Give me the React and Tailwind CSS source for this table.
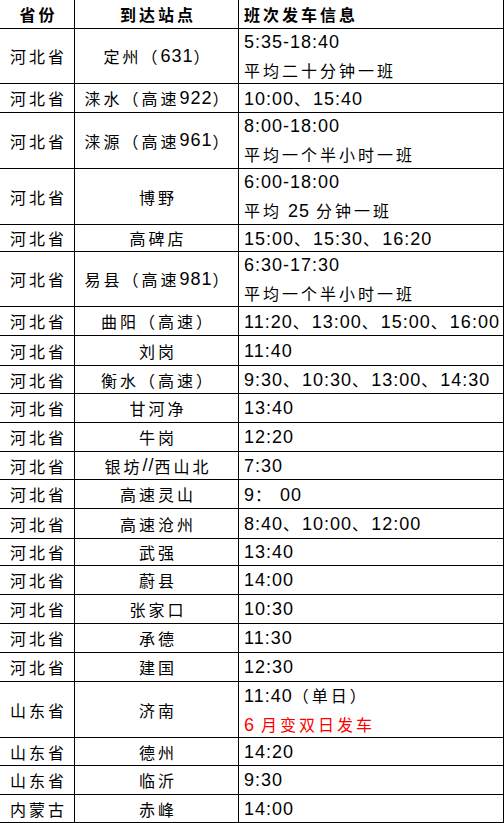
import React from 'react'

// [省份, 到达站点, 班次信息 lines, row height incl. bottom border, red second line]
const ROWS = [
  ['河北省', '定州（631）', ['5:35-18:40', '平均二十分钟一班'], 55],
  ['河北省', '涞水（高速 922）', ['10:00、15:40'], 29],
  ['河北省', '涞源（高速 961）', ['8:00-18:00', '平均一个半小时一班'], 56],
  ['河北省', '博野', ['6:00-18:00', '平均 25 分钟一班'], 56],
  ['河北省', '高碑店', ['15:00、15:30、16:20'], 27],
  ['河北省', '易县（高速 981）', ['6:30-17:30', '平均一个半小时一班'], 55],
  ['河北省', '曲阳（高速）', ['11:20、13:00、15:00、16:00'], 29],
  ['河北省', '刘岗', ['11:40'], 30],
  ['河北省', '衡水（高速）', ['9:30、10:30、13:00、14:30'], 28],
  ['河北省', '甘河净', ['13:40'], 29],
  ['河北省', '牛岗', ['12:20'], 29],
  ['河北省', '银坊//西山北', ['7:30'], 28],
  ['河北省', '高速灵山', ['9： 00'], 29],
  ['河北省', '高速沧州', ['8:40、10:00、12:00'], 30],
  ['河北省', '武强', ['13:40'], 27],
  ['河北省', '蔚县', ['14:00'], 29],
  ['河北省', '张家口', ['10:30'], 29],
  ['河北省', '承德', ['11:30'], 29],
  ['河北省', '建国', ['12:30'], 29],
  ['山东省', '济南', ['11:40（单日）', '6 月变双日发车'], 56, true],
  ['山东省', '德州', ['14:20'], 28],
  ['山东省', '临沂', ['9:30'], 29],
  ['内蒙古', '赤峰', ['14:00'], 28],
]

const CJK = /([\u3000-\u303f\u4e00-\u9fff\uff00-\uffef]+)/

// split mixed text so Chinese and Latin runs get their own size / spacing
function T({ text }) {
  return text.split(CJK).filter(Boolean).map((part, i) =>
    CJK.test(part) ? (
      <span key={i} className="text-[16px] tracking-[3px] font-['Noto_Sans_CJK_SC',sans-serif]">{part}</span>
    ) : (
      <span key={i} className="text-[18px] tracking-[1px] font-['Liberation_Sans','Noto_Sans_CJK_SC',sans-serif]">{part}</span>
    )
  )
}

function Row({ prov, station, info, h, red }) {
  return (
    <div className="flex border-b border-black" style={{ height: h }}>
      <div className="w-[75px] shrink-0 border-r border-black flex items-center justify-center whitespace-nowrap pl-[3px]">
        <T text={prov} />
      </div>
      <div className="w-[164px] shrink-0 border-r border-black flex items-center justify-center whitespace-nowrap pl-[3px]">
        <T text={station} />
      </div>
      <div className="flex-1 border-r border-black flex flex-col justify-center pl-[5px] whitespace-nowrap">
        {info.map((line, i) => (
          <div key={i} className={`leading-[28px] ${red && i === 1 ? 'text-[#ff0000]' : 'text-black'}`}>
            <T text={line} />
          </div>
        ))}
      </div>
    </div>
  )
}

export default function App() {
  return (
    <div className="w-[504px] h-[823px] bg-white text-black overflow-hidden">
      {/* header */}
      <div className="flex h-[29px] border-b border-black font-bold">
        <div className="w-[75px] shrink-0 border-r border-black flex items-center justify-center pl-[3px]">
          <T text="省份" />
        </div>
        <div className="w-[164px] shrink-0 border-r border-black flex items-center justify-center pl-[3px]">
          <T text="到达站点" />
        </div>
        <div className="flex-1 border-r border-black flex items-center pl-[5px]">
          <T text="班次发车信息" />
        </div>
      </div>
      {ROWS.map(([prov, station, info, h, red], i) => (
        <Row key={i} prov={prov} station={station} info={info} h={h} red={red} />
      ))}
    </div>
  )
}
